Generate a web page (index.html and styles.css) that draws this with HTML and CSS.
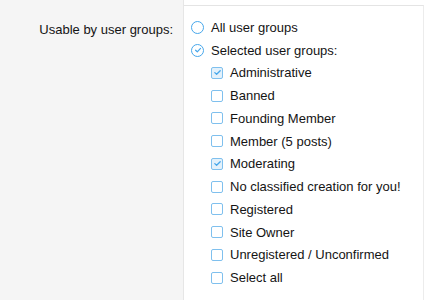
FILE: index.html
```html
<!DOCTYPE html>
<html lang="en">
<head>
    <meta charset="UTF-8">
    <title>Usable by user groups</title>
    <link rel="stylesheet" href="styles.css">
</head>
<body>

<div class="form-row">
    <div class="form-label">Usable by user groups:</div>
    <div class="form-input">
        <ul class="choices">
            <li class="choice">
                <span class="radio"></span>
                <span>All user groups</span>
            </li>
            <li class="choice">
                <span class="radio checked">
                    <svg viewBox="0 0 12 12" width="12" height="12"><path d="M3.6 6.2 L5.3 7.8 L8.5 4.4" fill="none" stroke="#47a7eb" stroke-width="1.2" stroke-linecap="round" stroke-linejoin="round"/></svg>
                </span>
                <span>Selected user groups:</span>
            </li>
        </ul>
        <ul class="groups">
            <li class="choice"><span class="box checked"><svg viewBox="0 0 11 11" width="11" height="11"><path d="M2.8 5.6 L4.6 7.3 L8.2 3.8" fill="none" stroke="#47a7eb" stroke-width="1.3" stroke-linecap="round" stroke-linejoin="round"/></svg></span><span>Administrative</span></li>
            <li class="choice"><span class="box"></span><span>Banned</span></li>
            <li class="choice"><span class="box"></span><span>Founding Member</span></li>
            <li class="choice"><span class="box"></span><span>Member (5 posts)</span></li>
            <li class="choice"><span class="box checked"><svg viewBox="0 0 11 11" width="11" height="11"><path d="M2.8 5.6 L4.6 7.3 L8.2 3.8" fill="none" stroke="#47a7eb" stroke-width="1.3" stroke-linecap="round" stroke-linejoin="round"/></svg></span><span>Moderating</span></li>
            <li class="choice"><span class="box"></span><span>No classified creation for you!</span></li>
            <li class="choice"><span class="box"></span><span>Registered</span></li>
            <li class="choice"><span class="box"></span><span>Site Owner</span></li>
            <li class="choice"><span class="box"></span><span>Unregistered / Unconfirmed</span></li>
            <li class="choice"><span class="box"></span><span>Select all</span></li>
        </ul>
    </div>
</div>

</body>
</html>
```

FILE: styles.css
```css
* {
    box-sizing: border-box;
    margin: 0;
    padding: 0;
    font-family: 'Liberation Sans', Arial, sans-serif;
}

body {
    background-color: #fff;
    color: #141414;
    font-size: 13px;
}

.form-row {
    display: flex;
    height: 300px;
}

.form-label {
    width: 184px;
    flex-shrink: 0;
    background-color: #f5f5f5;
    border-right: 1px solid #e6e6e6;
    text-align: right;
    padding: 22px 10px 0 0;
    line-height: 16px;
}

.form-input {
    width: 240px;
    border-top: 1px solid #e4e4e4;
    border-right: 1px solid #ececec;
    margin-top: 5px;
    padding: 10px 0 0 7px;
}

ul {
    list-style: none;
}

.choice {
    display: flex;
    align-items: center;
    height: 22.75px;
    gap: 7px;
}

.groups {
    padding-left: 20px;
}

.radio {
    width: 13px;
    height: 13px;
    border: 1px solid #47a7eb;
    border-radius: 50%;
    display: flex;
    align-items: center;
    justify-content: center;
}

.radio svg {
    flex-shrink: 0;
}

.box {
    width: 12px;
    height: 12px;
    border: 1px solid #7fc0ee;
    border-radius: 2px;
    display: flex;
    align-items: center;
    justify-content: center;
}

.box.checked {
    background-color: #e3f1fb;
}

.box svg {
    flex-shrink: 0;
}
```
